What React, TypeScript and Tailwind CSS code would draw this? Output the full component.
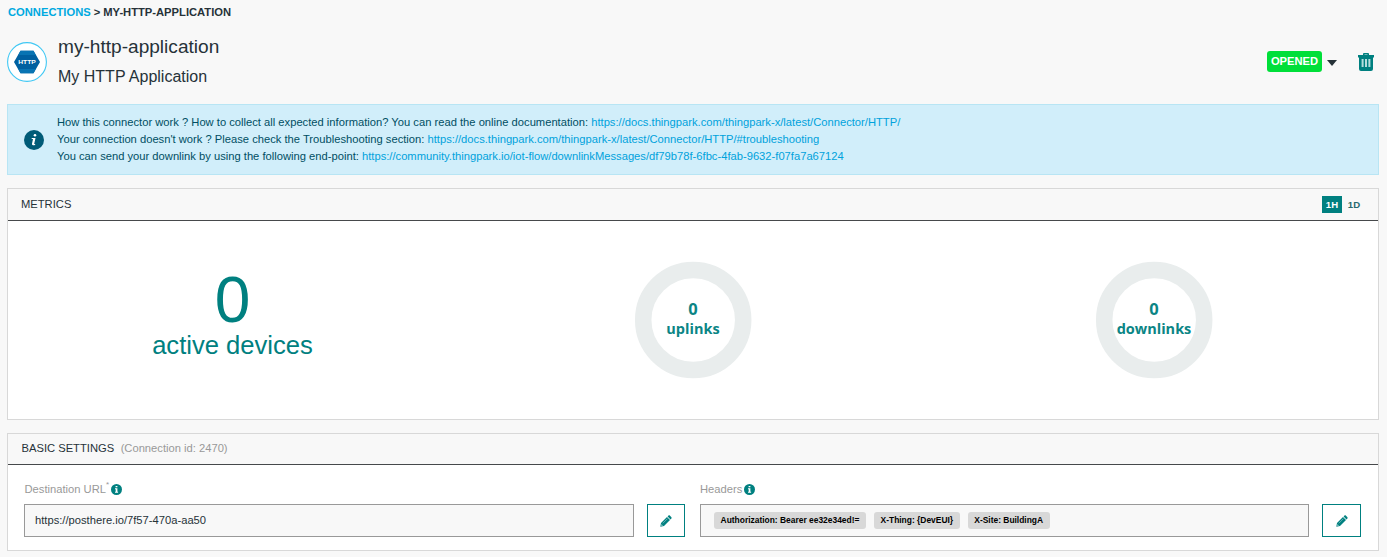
import React from "react";

function InfoDot() {
  return (
    <svg width="11" height="11" viewBox="0 0 11 11" className="block">
      <circle cx="5.5" cy="5.5" r="5.5" fill="#008080" />
      <path d="M4.6 1.9h1.8v1.4H4.6zM4 4.3h2.4v3.4h.7v1H4v-1h.7V5.3H4z" fill="#fff" />
    </svg>
  );
}

function EditButton({ width }: { width: string }) {
  return (
    <button className={`flex h-[33px] shrink-0 items-center justify-center border border-[#008080] bg-white ${width}`}>
      <svg width="12" height="12" viewBox="0 0 12 12">
        <path d="M.3 11.7l.7-3.7L7 2l3 3-6 6z" fill="#008080" />
        <path d="M7.6 1.5l.9-.9c.4-.4.9-.4 1.3 0l1.6 1.6c.4.4.4.9 0 1.3l-.9.9z" fill="#008080" />
        <path d="M1.5 9.2l1.3 1.3-1.1.2-.4-.4z" fill="#fff" />
        <path d="M2.8 8.3l4.6-4.6" stroke="#8cc6c6" strokeWidth=".7" />
      </svg>
    </button>
  );
}

function Donut({ value, label }: { value: string; label: string }) {
  return (
    <svg width="118" height="118" viewBox="0 0 118 118" className="block">
      <circle cx="59.2" cy="59" r="50" fill="none" stroke="#e9eded" strokeWidth="16.5" />
      <g
        fill="#0b8585"
        textAnchor="middle"
        className="font-['Open_Sans','Noto_Sans',sans-serif] font-bold"
      >
        <text x="59" y="54" className="text-[16.5px]">{value}</text>
        <text x="59" y="73" className="text-[14.5px]">{label}</text>
      </g>
    </svg>
  );
}

function Tag({ children }: { children: React.ReactNode }) {
  return (
    <span className="flex h-[17px] items-center whitespace-nowrap rounded-[3px] bg-[#d8d8d8] px-[6.6px] text-[8.43px] font-bold text-black">
      {children}
    </span>
  );
}

const notes = [
  {
    text: "How this connector work ? How to collect all expected information? You can read the online documentation:",
    link: "https://docs.thingpark.com/thingpark-x/latest/Connector/HTTP/",
  },
  {
    text: "Your connection doesn't work ? Please check the Troubleshooting section:",
    link: "https://docs.thingpark.com/thingpark-x/latest/Connector/HTTP/#troubleshooting",
  },
  {
    text: "You can send your downlink by using the following end-point:",
    link: "https://community.thingpark.io/iot-flow/downlinkMessages/df79b78f-6fbc-4fab-9632-f07fa7a67124",
  },
];

export default function App() {
  return (
    <div className="h-[557px] w-[1387px] overflow-hidden bg-[#f8f8f8] pl-[7px] pr-2 font-['Liberation_Sans',Arial,sans-serif] text-[11.2px] text-[#263238]">
      <nav className="flex h-6 items-center gap-[3px] pl-[1px] font-bold">
        <a className="text-[#00a9e0]">CONNECTIONS</a>
        <span>&gt;</span>
        <span>MY-HTTP-APPLICATION</span>
      </nav>

      <header className="flex h-20 items-start">
        <svg width="40" height="40" viewBox="0 0 40 40" className="mt-[18px] shrink-0">
          <circle cx="20" cy="20" r="19.4" fill="#fff" stroke="#41c8f4" strokeWidth="1.1" />
          <path d="M13.5 8.8h13L33 20l-6.5 11.2h-13L7 20z" fill="#0060a0" />
          <path d="M13.5 8.8h13L28.8 13H11.2zM11.2 27h17.6l-2.3 4.2h-13z" fill="#0874b3" />
          <text x="20" y="22.2" textAnchor="middle" textLength="17.5" lengthAdjust="spacingAndGlyphs" fill="#fff" className="font-['Liberation_Sans',sans-serif] text-[6px] font-bold">HTTP</text>
        </svg>
        <div className="ml-[11px] flex-1 pt-[12px]">
          <h1 className="text-[19.1px] leading-[22px]">my-http-application</h1>
          <p className="mt-[9px] text-[16px] leading-[20px]">My HTTP Application</p>
        </div>
        <div className="mt-[27px] flex">
          <span className="flex h-[21px] w-[55px] items-center justify-center rounded-[3px] bg-[#00df39] text-[11.2px] font-bold text-white">OPENED</span>
          <svg width="10" height="6" viewBox="0 0 10 6" className="ml-[5px] mt-[9px]">
            <path d="M0 0h10L5 6z" fill="#263238" />
          </svg>
          <svg width="16" height="18" viewBox="0 0 16 18" className="ml-[21px] mt-[2px]">
            <path d="M0 2h5V1q0-1 1-1h4q1 0 1 1v1h5v2.500h-1V16q0 2-2 2H3q-2 0-2-2V4.500H0z" fill="#008080" />
            <path d="M6.500 1.200h3V2h-3z" fill="#8fc8c8" />
            <path d="M4.600 6v8M8 6v8M11.400 6v8" stroke="#b5dddd" strokeWidth="2" />
          </svg>
          <span className="w-[5px]" />
        </div>
      </header>

      <section className="flex h-[71px] items-center border border-[#b8e5f4] bg-[#d1eefa] pl-4 text-[#004f63]">
        <svg width="20" height="20" viewBox="0 0 20 20" className="shrink-0">
          <circle cx="10" cy="10" r="10" fill="#005b77" />
          <circle cx="11" cy="5.3" r="1.3" fill="#fff" />
          <path d="M7.8 8h3.7l-1.3 5.7q-.1.5.5.4l.6-.2-.3 1q-1 .5-2 .4-1.3-.2-1-1.6L9 9H7.600z" fill="#fff" />
        </svg>
        <div className="ml-[13px] leading-[17px]">
          {notes.map((n) => (
            <p key={n.link} className="whitespace-nowrap">
              {n.text} <a className="text-[#00a2dc]">{n.link}</a>
            </p>
          ))}
        </div>
      </section>

      <section className="mt-[13px] h-[232px] border border-[#d8d8d8] bg-white">
        <div className="flex h-8 items-center justify-between border-b border-[#46494b] bg-[#f8f8f8] pl-[13px] pr-3">
          <h2>METRICS</h2>
          <div className="flex text-[9.6px] font-bold">
            <span className="flex h-[17px] w-5 items-center justify-center bg-[#008080] pt-px text-white">1H</span>
            <span className="flex h-[17px] w-6 items-center justify-center pt-px text-[#28686e]">1D</span>
          </div>
        </div>
        <div className="flex h-[198px] text-[#008080]">
          <div className="flex w-[449px] flex-col items-center pt-[47px]">
            <span className="text-[64px] leading-[64px]">0</span>
            <span className="-mt-[2px] text-[25.6px] leading-[30px]">active devices</span>
          </div>
          <div className="flex w-[472px] justify-center pt-10">
            <Donut value="0" label="uplinks" />
          </div>
          <div className="flex w-[449px] justify-center pt-10">
            <Donut value="0" label="downlinks" />
          </div>
        </div>
      </section>

      <section className="mt-[13px] h-[118px] border border-[#d8d8d8] bg-white">
        <div className="flex h-[31px] items-center gap-[6.5px] border-b border-[#46494b] bg-[#f8f8f8] pb-px pl-[13.5px]">
          <h2>BASIC SETTINGS</h2>
          <span className="text-[#999]">(Connection id: 2470)</span>
        </div>
        <div className="flex pl-4 pr-[17px] pt-[17px]">
          <div className="w-[661px]">
            <div className="flex h-[15px] items-center pl-[0.5px] text-[#999]">
              Destination URL<sup className="-top-[5px] w-[5px] text-[8px]">*</sup>
              <InfoDot />
            </div>
            <div className="mt-[7px] flex justify-between">
              <div className="flex h-[33px] w-[610px] items-center border border-[#999] bg-[#f8f8f8] pl-[10px]">
                https://posthere.io/7f57-470a-aa50
              </div>
              <EditButton width="w-[38px]" />
            </div>
          </div>
          <div className="ml-[15px] w-[661px]">
            <div className="flex h-[15px] items-center gap-[1.5px] text-[#999]">
              Headers
              <InfoDot />
            </div>
            <div className="mt-[7px] flex justify-between">
              <div className="flex h-[33px] w-[609px] items-center gap-2 border border-[#999] bg-[#f8f8f8] pl-[13px]">
                <Tag>Authorization: Bearer ee32e34ed!=</Tag>
                <Tag>X-Thing: {"{DevEUI}"}</Tag>
                <Tag>X-Site: BuildingA</Tag>
              </div>
              <EditButton width="w-[39px]" />
            </div>
          </div>
        </div>
      </section>
    </div>
  );
}
